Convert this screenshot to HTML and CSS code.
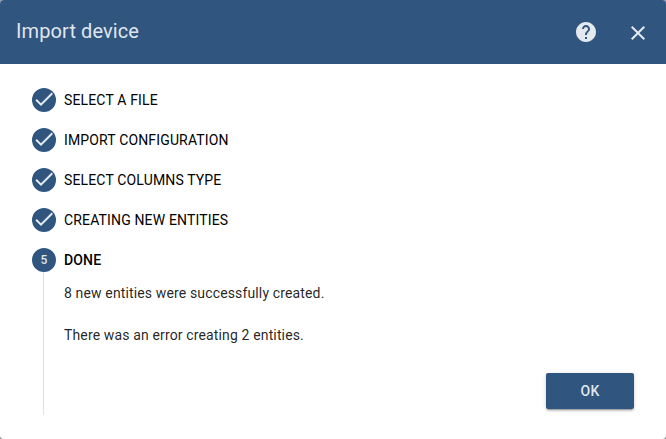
FILE: index.html
```
<!DOCTYPE html>
<html lang="en">
<head>
<meta charset="utf-8">
<title>Import device</title>
<link rel="stylesheet" href="styles.css">
</head>
<body>
<main class="dialog">
  <header class="toolbar">
    <h1 class="title">Import device</h1>
    <button class="icon-button" aria-label="Help"><svg viewBox="0 0 24 24"><path d="M12 2C6.48 2 2 6.48 2 12s4.48 10 10 10 10-4.48 10-10S17.52 2 12 2zm1 17h-2v-2h2v2zm2.07-7.75l-.9.92C13.45 12.9 13 13.5 13 15h-2v-.5c0-1.1.45-2.1 1.17-2.83l1.24-1.26c.37-.36.59-.86.59-1.41 0-1.1-.9-2-2-2s-2 .9-2 2H8c0-2.21 1.79-4 4-4s4 1.79 4 4c0 .88-.36 1.68-.93 2.25z"/></svg></button>
    <button class="icon-button close" aria-label="Close"><svg viewBox="0 0 24 24"><path d="M19 6.41L17.59 5 12 10.59 6.41 5 5 6.41 10.59 12 5 17.59 6.41 19 12 13.41 17.59 19 19 17.59 13.41 12z"/></svg></button>
  </header>
  <section class="stepper">
    <div class="step"><span class="marker"><svg viewBox="0 0 24 24"><path d="M9 16.17L4.83 12l-1.42 1.41L9 19 21 7l-1.41-1.41z"/></svg></span><span>SELECT A FILE</span></div>
    <div class="step"><span class="marker"><svg viewBox="0 0 24 24"><path d="M9 16.17L4.83 12l-1.42 1.41L9 19 21 7l-1.41-1.41z"/></svg></span><span>IMPORT CONFIGURATION</span></div>
    <div class="step"><span class="marker"><svg viewBox="0 0 24 24"><path d="M9 16.17L4.83 12l-1.42 1.41L9 19 21 7l-1.41-1.41z"/></svg></span><span>SELECT COLUMNS TYPE</span></div>
    <div class="step"><span class="marker"><svg viewBox="0 0 24 24"><path d="M9 16.17L4.83 12l-1.42 1.41L9 19 21 7l-1.41-1.41z"/></svg></span><span>CREATING NEW ENTITIES</span></div>
    <div class="step active"><span class="marker">5</span><span>DONE</span></div>
    <div class="content">
      <p>8 new entities were successfully created.</p>
      <p>There was an error creating 2 entities.</p>
      <button class="ok">OK</button>
    </div>
  </section>
</main>
</body>
</html>
```
FILE: styles.css
```
* { box-sizing: border-box; }
body { margin: 0; background: #999; font-family: Roboto, sans-serif; color: rgba(0,0,0,.87); }
button { border: 0; padding: 0; font: inherit; }
.dialog { height: 439px; background: #fff; border-radius: 4px; overflow: hidden; }
.toolbar { height: 64px; display: flex; align-items: center; padding: 0 8px 0 16px; gap: 12px; background: #305680; color: rgba(255,255,255,.87); }
.title { flex: 1; margin: 0; padding-bottom: 2px; font-size: 20px; line-height: 32px; font-weight: 400; letter-spacing: .1px; }
.icon-button { width: 40px; height: 40px; background: none; color: inherit; display: grid; place-items: center; }
.icon-button svg { width: 24px; height: 24px; fill: currentColor; display: block; }
.close { padding-top: 2px; }
.stepper { padding: 16px 32px 24px; display: flex; flex-direction: column; }
.step { height: 40px; display: flex; align-items: center; gap: 8px; font-size: 14px; letter-spacing: .15px; color: #000; }
.active { font-weight: 500; }
.marker { width: 24px; height: 24px; border-radius: 50%; background: #305680; color: rgba(255,255,255,.87); font-size: 12px; font-weight: 500; display: grid; place-items: center; }
.marker svg { width: 24px; height: 24px; fill: currentColor; transform: translateY(-1px); }
.content { height: 143px; margin: -8px 0 0 11px; padding: 11px 0 0 20px; border-left: 1px solid #e2e2e2; display: flex; flex-direction: column; font-size: 14px; line-height: 20px; letter-spacing: .14px; }
.content p { margin: 0 0 22px; }
.ok { align-self: flex-end; width: 88px; height: 36px; margin-top: 6px; border-radius: 2px; background: #305680; color: rgba(255,255,255,.87); font-weight: 500; letter-spacing: .2px; box-shadow: 0 3px 1px -2px rgba(0,0,0,.2), 0 2px 2px rgba(0,0,0,.14), 0 1px 5px rgba(0,0,0,.12); }
```
